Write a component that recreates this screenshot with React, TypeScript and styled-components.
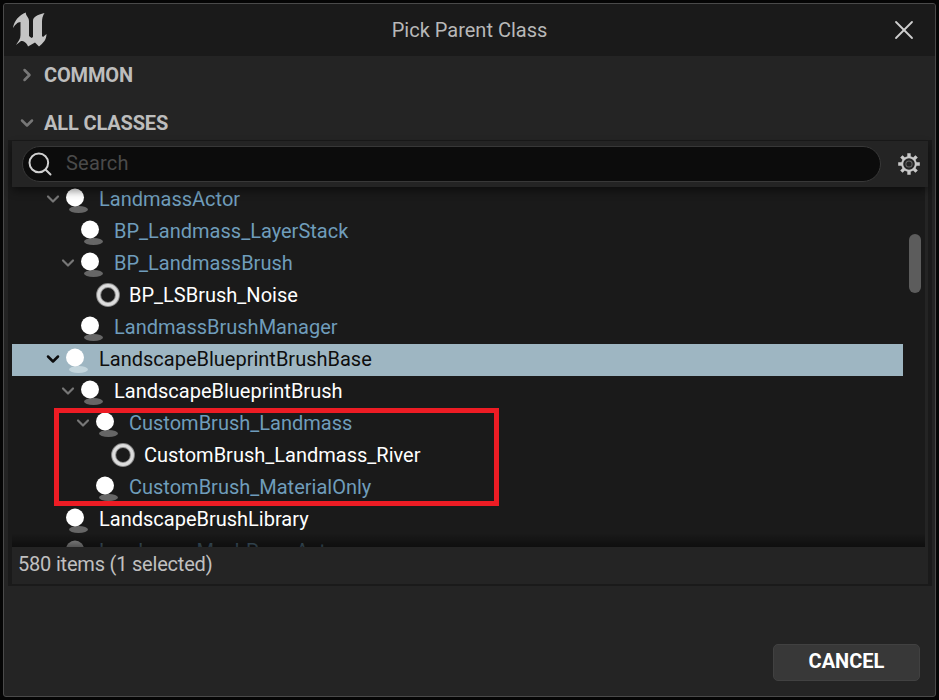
import styled, { createGlobalStyle } from "styled-components";
import { ChevronDown, ChevronRight, Search, X } from "lucide-react";

const GlobalStyle = createGlobalStyle`
  html, body {
    margin: 0;
    height: 100%;
    background: #050505;
  }
  body {
    font-family: Roboto, "Liberation Sans", sans-serif;
  }
`;

type Kind = "sphere" | "ring";

interface RowData {
  name: string;
  depth: number;
  kind?: Kind;
  blueprint?: boolean;
  expanded?: boolean;
  selected?: boolean;
  dim?: boolean;
}

const before: RowData[] = [
  { name: "LandmassActor", depth: 0, blueprint: true, expanded: true },
  { name: "BP_Landmass_LayerStack", depth: 1, blueprint: true },
  { name: "BP_LandmassBrush", depth: 1, blueprint: true, expanded: true },
  { name: "BP_LSBrush_Noise", depth: 2, kind: "ring" },
  { name: "LandmassBrushManager", depth: 1, blueprint: true },
  { name: "LandscapeBlueprintBrushBase", depth: 0, expanded: true, selected: true },
  { name: "LandscapeBlueprintBrush", depth: 1, expanded: true },
];

const boxed: RowData[] = [
  { name: "CustomBrush_Landmass", depth: 2, blueprint: true, expanded: true },
  { name: "CustomBrush_Landmass_River", depth: 3, kind: "ring" },
  { name: "CustomBrush_MaterialOnly", depth: 2, blueprint: true },
];

const after: RowData[] = [
  { name: "LandscapeBrushLibrary", depth: 0 },
  { name: "LandscapeMeshProxyActor", depth: 0, blueprint: true, dim: true },
];

const UnrealLogo = () => (
  <svg width="36" height="36" viewBox="0 0 36 36" fill="#c4c4c4">
    <path d="M1 16C2 9 7 3 14 0.5C13 3 17 5 17 9V24L19.5 26L21 25V9C21 5 25 3 32.5 1C30.5 4 30 7 30 10V24L31 25L34.5 22C34.5 28 31 31 27 34.5L23 30.5L16 34.5C15 31 12 29 9 29L4 33C6.5 29 8.5 27 8.5 23V10C5.5 10 3 13 1 16Z" />
  </svg>
);

const GearIcon = () => (
  <svg width="24" height="24" viewBox="0 0 24 24">
    <g stroke="#c8c8c8" strokeWidth="3.4">
      <path d="M12 1.2V22.8M1.2 12H22.8M4.4 4.4L19.6 19.6M19.6 4.4L4.4 19.6" />
    </g>
    <circle cx="12" cy="12" r="7.8" fill="#c8c8c8" />
    <circle cx="12" cy="12" r="5.8" fill="#242424" />
    <circle cx="12" cy="12" r="3.6" fill="#6a6a6a" />
    <circle cx="12" cy="12" r="2.6" fill="#242424" />
  </svg>
);

const SphereIcon = ({ selected }: { selected?: boolean }) => (
  <svg width="24" height="28" viewBox="0 0 24 28">
    <ellipse cx="12.5" cy="24.5" rx="9.5" ry="3.5" fill={selected ? "#c3d5dc" : "#666666"} />
    <circle cx="9" cy="12.5" r="9" fill="#ffffff" />
  </svg>
);

const RingIcon = () => (
  <svg width="24" height="24" viewBox="0 0 24 24">
    <circle cx="12" cy="12" r="9.4" fill="none" stroke="#8c8c8c" strokeWidth="5" />
    <circle cx="12" cy="12" r="9.4" fill="none" stroke="#dddddd" strokeWidth="3" />
  </svg>
);

const TreeRow = ({ row }: { row: RowData }) => (
  <Row $depth={row.depth} $selected={!!row.selected} $dim={!!row.dim}>
    <Arrow $selected={!!row.selected}>
      {row.expanded && <ChevronDown size={20} strokeWidth={row.selected ? 3 : 2.6} />}
    </Arrow>
    <IconSlot>{row.kind === "ring" ? <RingIcon /> : <SphereIcon selected={row.selected} />}</IconSlot>
    <RowName $blueprint={!!row.blueprint} $selected={!!row.selected}>
      {row.name}
    </RowName>
  </Row>
);

export default function App() {
  return (
    <>
      <GlobalStyle />
      <Window>
        <TitleBar>
          <LogoSlot>
            <UnrealLogo />
          </LogoSlot>
          <Title>Pick Parent Class</Title>
          <CloseSlot>
            <X size={32} strokeWidth={1.35} />
          </CloseSlot>
        </TitleBar>
        <Body>
          <SectionHeader>
            <SectionArrow>
              <ChevronRight size={20} strokeWidth={3} />
            </SectionArrow>
            COMMON
          </SectionHeader>
          <SectionHeader>
            <SectionArrow>
              <ChevronDown size={20} strokeWidth={3} />
            </SectionArrow>
            ALL CLASSES
          </SectionHeader>
          <Panel>
            <SearchRow>
              <SearchBox>
                <Search size={28} strokeWidth={1.7} color="#d0d0d0" />
                <SearchText>Search</SearchText>
              </SearchBox>
              <GearSlot>
                <GearIcon />
              </GearSlot>
            </SearchRow>
            <Tree>
              <Rows>
                {before.map((r) => (
                  <TreeRow key={r.name} row={r} />
                ))}
                <BoxedGroup>
                  {boxed.map((r) => (
                    <TreeRow key={r.name} row={r} />
                  ))}
                  <RedBox />
                </BoxedGroup>
                {after.map((r) => (
                  <TreeRow key={r.name} row={r} />
                ))}
              </Rows>
              <ScrollThumb />
              <BottomShade />
            </Tree>
            <StatusBar>580 items (1 selected)</StatusBar>
          </Panel>
          <Footer>
            <CancelButton>CANCEL</CancelButton>
          </Footer>
        </Body>
      </Window>
    </>
  );
}

const Window = styled.div`
  box-sizing: border-box;
  width: 933px;
  height: 694px;
  margin: 3px 0 0 3px;
  border: 1px solid #4a4a4a;
  border-radius: 3px;
  display: flex;
  flex-direction: column;
  background: #242424;
  overflow: hidden;
`;

const TitleBar = styled.div`
  flex: none;
  height: 52px;
  display: grid;
  grid-template-columns: 1fr auto 1fr;
  align-items: center;
  background: #1a1a1a;
`;

const LogoSlot = styled.div`
  display: flex;
  padding: 0 0 0 8px;
`;

const Title = styled.div`
  font-size: 20px;
  color: #b8b8b8;
`;

const CloseSlot = styled.div`
  justify-self: end;
  display: flex;
  padding-right: 15px;
  color: #cfcfcf;
`;

const Body = styled.div`
  flex: 1;
  min-height: 0;
  display: flex;
  flex-direction: column;
`;

const SectionHeader = styled.div`
  height: 48px;
  flex: none;
  display: flex;
  align-items: center;
  padding-left: 13px;
  font-size: 20px;
  font-weight: 700;
  letter-spacing: -0.15px;
  color: #bdbdbd;
  &:first-child {
    margin-top: -5px;
  }
`;

const SectionArrow = styled.span`
  display: flex;
  width: 27px;
  color: #777777;
`;

const Panel = styled.div`
  flex: none;
  margin: -7px 3px 0 4px;
  height: 446px;
  box-sizing: border-box;
  display: flex;
  flex-direction: column;
  border: 1px solid #1a1a1a;
  border-right-width: 4px;
  border-bottom-width: 2px;
  border-left-width: 4px;
`;

const SearchRow = styled.div`
  flex: none;
  height: 46px;
  display: flex;
  align-items: center;
  padding: 0 0 0 10px;
  gap: 16px;
  background: #242424;
  position: relative;
  z-index: 1;
  box-shadow: 0 4px 8px rgba(0, 0, 0, 0.45);
`;

const SearchBox = styled.div`
  box-sizing: border-box;
  width: 859px;
  height: 36px;
  display: flex;
  align-items: center;
  gap: 12px;
  padding-left: 3px;
  border: 1px solid #383838;
  border-radius: 18px;
  background: #0c0c0c;
`;

const SearchText = styled.span`
  font-size: 20px;
  letter-spacing: 0.2px;
  color: #4a4a4a;
  padding-bottom: 2px;
`;

const GearSlot = styled.div`
  display: flex;
`;

const Tree = styled.div`
  flex: none;
  height: 360px;
  margin-right: 3px;
  position: relative;
  overflow: hidden;
  background: #1a1a1a;
`;

const Rows = styled.div`
  width: 891px;
  margin-top: -3px;
`;

const BoxedGroup = styled.div`
  position: relative;
`;

const RedBox = styled.div`
  position: absolute;
  left: 42px;
  top: 0;
  width: 445px;
  height: 98px;
  box-sizing: border-box;
  border: 5px solid #ed1c24;
  pointer-events: none;
`;

const Row = styled.div<{ $depth: number; $selected: boolean; $dim: boolean }>`
  box-sizing: border-box;
  height: 32px;
  padding-bottom: 2px;
  display: flex;
  align-items: center;
  padding-left: ${(props) => 31 + props.$depth * 15}px;
  background: ${(props) => (props.$selected ? "#9eb6c2" : "transparent")};
  opacity: ${(props) => (props.$dim ? 0.55 : 1)};
`;

const Arrow = styled.span<{ $selected: boolean }>`
  flex: none;
  width: 20px;
  display: flex;
  color: ${(props) => (props.$selected ? "#0c0c0c" : "#777777")};
`;

const IconSlot = styled.span`
  flex: none;
  width: 36px;
  height: 30px;
  display: flex;
  align-items: center;
  padding-left: 3px;
  box-sizing: border-box;
`;

const RowName = styled.span<{ $blueprint: boolean; $selected: boolean }>`
  font-size: 20px;
  white-space: nowrap;
  color: ${(props) => (props.$selected ? "#0e0e0e" : props.$blueprint ? "#6f9dbb" : "#ffffff")};
`;

const ScrollThumb = styled.div`
  position: absolute;
  left: 897px;
  top: 47px;
  width: 12px;
  height: 59px;
  border-radius: 6px;
  background: #5c5c5c;
`;

const BottomShade = styled.div`
  position: absolute;
  left: 0;
  right: 0;
  bottom: 0;
  height: 14px;
  background: linear-gradient(to bottom, rgba(0, 0, 0, 0), rgba(0, 0, 0, 0.45));
`;

const StatusBar = styled.div`
  flex: 1;
  display: flex;
  align-items: center;
  padding-left: 6px;
  padding-bottom: 4px;
  font-size: 20px;
  letter-spacing: -0.2px;
  color: #c0c0c0;
  background: #242424;
`;

const Footer = styled.div`
  flex: 1;
  display: flex;
  justify-content: flex-end;
  align-items: flex-end;
  padding: 0 15px 15px 0;
`;

const CancelButton = styled.button`
  width: 147px;
  height: 37px;
  padding: 0 0 3px;
  border: 1px solid #414141;
  border-radius: 5px;
  background: #383838;
  color: #ffffff;
  font-family: inherit;
  font-size: 20px;
  font-weight: 700;
`;
